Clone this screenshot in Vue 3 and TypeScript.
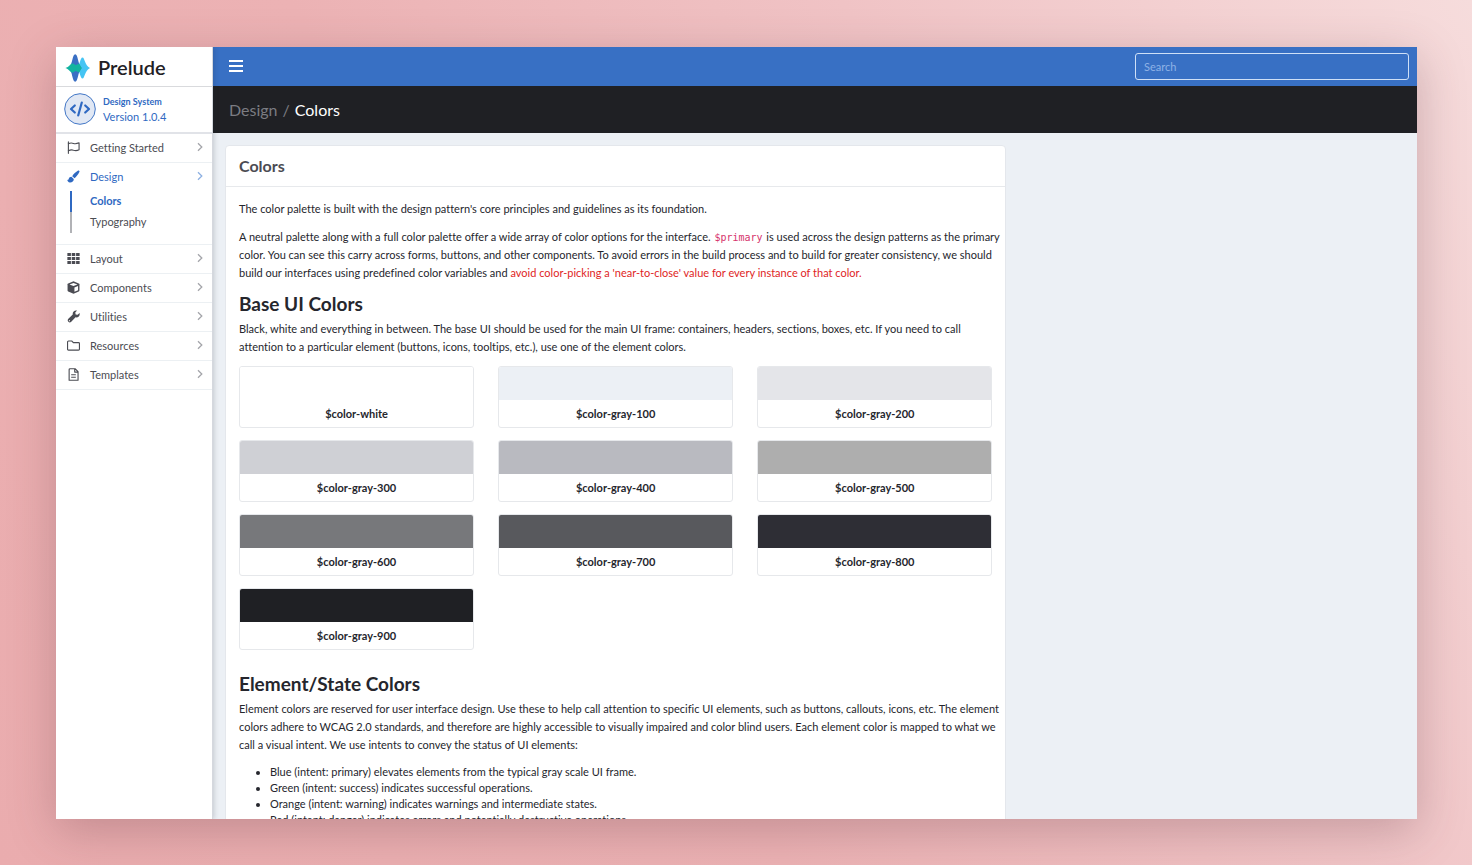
<script setup lang="ts">
import { ref } from 'vue'

interface NavItem {
  label: string
  icon: string
  children?: string[]
}

interface Swatch {
  name: string
  color: string
}

const search = ref('')
const activePage = ref('Colors')

const navItems: NavItem[] = [
  { label: 'Getting Started', icon: 'flag' },
  { label: 'Design', icon: 'brush', children: ['Colors', 'Typography'] },
  { label: 'Layout', icon: 'grid' },
  { label: 'Components', icon: 'cube' },
  { label: 'Utilities', icon: 'wrench' },
  { label: 'Resources', icon: 'folder' },
  { label: 'Templates', icon: 'file' },
]

const swatches: Swatch[] = [
  { name: '$color-white', color: '#ffffff' },
  { name: '$color-gray-100', color: '#ecf0f5' },
  { name: '$color-gray-200', color: '#e4e5e9' },
  { name: '$color-gray-300', color: '#cfd0d5' },
  { name: '$color-gray-400', color: '#b9bac0' },
  { name: '$color-gray-500', color: '#aeaeae' },
  { name: '$color-gray-600', color: '#77787b' },
  { name: '$color-gray-700', color: '#58595d' },
  { name: '$color-gray-800', color: '#2e2e35' },
  { name: '$color-gray-900', color: '#1f2024' },
]
</script>

<template>
  <div class="stage">
    <div class="window">
      <aside class="sidebar">
        <a class="brand" href="#">
          <svg class="brand-mark" viewBox="0 0 26 28" aria-hidden="true">
            <path d="M17.500 3.500C19.800 3.500 19.600 11.500 25 14C19.600 16.500 19.800 24.500 17.500 24.500C15.200 24.500 15 17 12 14C15 11 15.200 3.500 17.500 3.500Z" fill="#45c4f3" />
            <path d="M10.200 .2C13 .2 12.800 10 16.500 14C12.800 18 13 27.800 10.200 27.800C7.400 27.800 7.600 18 3.900 14C7.600 10 7.400 .2 10.200 .2Z" fill="#3a6fc4" />
            <path d="M.4 14C4.200 13 5.300 9.400 7.600 9.400C9.400 9.400 9.400 11 10.800 11C12.200 11 12.300 9.700 13.600 9.700C15 9.700 15.400 12.600 17 14C15.400 15.400 15 18.300 13.600 18.300C12.300 18.300 12.200 17 10.800 17C9.400 17 9.400 18.600 7.600 18.600C5.300 18.600 4.200 15 .4 14Z" fill="#12b3a0" />
          </svg>
          <span>Prelude</span>
        </a>

        <div class="product">
          <svg class="product-mark" viewBox="0 0 32 32" aria-hidden="true">
            <circle cx="16" cy="16" r="15.300" fill="#e1e8f4" stroke="#4377c6" stroke-width="1" />
            <path d="M10.800 12.500L7 16L10.800 19.500M21.200 12.500L25 16L21.200 19.500M17.800 9.500L14.200 22.500" fill="none" stroke="#2f69c2" stroke-width="2.200" stroke-linecap="round" stroke-linejoin="round" />
          </svg>
          <div>
            <div class="product-name">Design System</div>
            <div class="product-version">Version 1.0.4</div>
          </div>
        </div>

        <nav class="nav" aria-label="Main">
          <div v-for="item in navItems" :key="item.label" class="nav-group" :class="{ open: item.children }">
            <a class="nav-link" href="#">
              <svg class="nav-icon" viewBox="0 0 14 14" aria-hidden="true">
                <g v-if="item.icon === 'flag'" fill="none" stroke="currentColor" stroke-width="1.200" stroke-linejoin="round" stroke-linecap="round">
                  <path d="M1.500 1V13.300" />
                  <path d="M1.500 3C4 1.500 5.500 2 7 2.600C9 3.400 10.500 3 13 2V9.500C10.500 10.700 9 10.600 7 9.900C5.500 9.300 4 9.200 1.500 10.500" />
                </g>
                <g v-else-if="item.icon === 'brush'" fill="currentColor">
                  <path d="M12 .6C12.900 .1 14 1.100 13.300 2.200C11.800 5 10 7.500 8.200 8.900L5.600 6.700C7 4.500 9.500 2 12 .6Z" />
                  <path d="M4.700 7.400L7.300 9.800C7.400 12.300 5.300 13.700 3 13.500C1.500 13.400 .4 12 .3 10.600C1 11 1.500 10.700 1.800 9.700C2.200 8.300 3.400 7.400 4.700 7.400Z" />
                </g>
                <g v-else-if="item.icon === 'grid'" fill="currentColor">
                  <path d="M.4 1h3.800v3.400H.4zM5.100 1h3.800v3.400H5.100zM9.800 1h3.800v3.400H9.800zM.4 5.300h3.800v3.400H.4zM5.100 5.300h3.800v3.400H5.100zM9.800 5.300h3.800v3.400H9.800zM.4 9.600h3.800v3.400H.4zM5.100 9.600h3.800v3.400H5.100zM9.800 9.600h3.800v3.400H9.800z" />
                </g>
                <g v-else-if="item.icon === 'cube'">
                  <path d="M7 .4L12.700 2.600Q13.400 2.900 13.400 3.600V10.200Q13.400 10.900 12.700 11.200L7 13.600L1.300 11.200Q.6 10.900 .6 10.200V3.600Q.6 2.900 1.300 2.600Z" fill="currentColor" />
                  <path d="M2.700 3.700L7 2.100L11.300 3.700L7 5.300ZM8 7L11.900 5.400V9.900L8 11.700Z" fill="#fff" />
                </g>
                <g v-else-if="item.icon === 'wrench'">
                  <path d="M13.600 3.300C14.200 6.300 12 8.500 9.200 7.900L4.300 13C2.600 14.500-.4 12.100 1.200 9.800L6.200 4.800C5.700 1.800 8.200-.1 10.800 .6L8.900 2.700L9.300 4.800L11.400 5.200Z" fill="currentColor" />
                  <circle cx="2.600" cy="11.500" r=".6" fill="#fff" />
                </g>
                <path v-else-if="item.icon === 'folder'" d="M1.600 2.200H5.200L6.900 3.900H12.400Q13.400 3.900 13.400 4.900V11Q13.400 12 12.400 12H1.600Q.6 12 .6 11V3.200Q.6 2.200 1.600 2.200Z" fill="none" stroke="currentColor" stroke-width="1.200" />
                <g v-else fill="none" stroke="currentColor" stroke-width="1.200" stroke-linejoin="round">
                  <path d="M3.300 .8H8.700L11.900 4V13.200H2.300V1.800Q2.300 .8 3.300 .8ZM8.300 1V4.400H11.700M4.500 7.300H9.500M4.500 10H9.500" />
                </g>
              </svg>
              <span class="nav-label">{{ item.label }}</span>
              <svg class="chevron" viewBox="0 0 6 10" aria-hidden="true">
                <path d="M1 1.200L4.800 5L1 8.800" fill="none" stroke="currentColor" stroke-width="1.300" />
              </svg>
            </a>
            <ul v-if="item.children" class="subnav">
              <li v-for="child in item.children" :key="child">
                <a href="#" :class="{ active: child === activePage }" @click.prevent="activePage = child">{{ child }}</a>
              </li>
            </ul>
          </div>
        </nav>
      </aside>

      <div class="main">
        <header class="topbar">
          <button class="menu" type="button" aria-label="Toggle menu">
            <svg viewBox="0 0 14 14" aria-hidden="true">
              <path d="M0 2H14M0 7H14M0 12H14" stroke="#fff" stroke-width="2" />
            </svg>
          </button>
          <input v-model="search" class="search" type="search" placeholder="Search" aria-label="Search" />
        </header>

        <nav class="crumbs" aria-label="Breadcrumb">
          <a href="#">Design</a>
          <span class="slash">/</span>
          <span class="current">Colors</span>
        </nav>

        <main class="content">
          <article class="card">
            <h1>Colors</h1>
            <div class="card-body">
              <p>The color palette is built with the design pattern's core principles and guidelines as its foundation.</p>
              <p>
                A neutral palette along with a full color palette offer a wide array of color options for the interface.
                <code>$primary</code> is used across the design patterns as the primary color. You can see this carry
                across forms, buttons, and other components. To avoid errors in the build process and to build for
                greater consistency, we should build our interfaces using predefined color variables and
                <span class="danger">avoid color-picking a 'near-to-close' value for every instance of that color.</span>
              </p>

              <h2>Base UI Colors</h2>
              <p>
                Black, white and everything in between. The base UI should be used for the main UI frame: containers,
                headers, sections, boxes, etc. If you need to call attention to a particular element (buttons, icons,
                tooltips, etc.), use one of the element colors.
              </p>

              <div class="swatches">
                <div v-for="swatch in swatches" :key="swatch.name" class="swatch">
                  <div class="chip" :style="{ backgroundColor: swatch.color }"></div>
                  <div class="swatch-name">{{ swatch.name }}</div>
                </div>
              </div>

              <h2>Element/State Colors</h2>
              <p>
                Element colors are reserved for user interface design. Use these to help call attention to specific UI
                elements, such as buttons, callouts, icons, etc. The element colors adhere to WCAG 2.0 standards, and
                therefore are highly accessible to visually impaired and color blind users. Each element color is mapped
                to what we call a visual intent. We use intents to convey the status of UI elements:
              </p>
              <ul class="intents">
                <li>Blue (intent: primary) elevates elements from the typical gray scale UI frame.</li>
                <li>Green (intent: success) indicates successful operations.</li>
                <li>Orange (intent: warning) indicates warnings and intermediate states.</li>
                <li>Red (intent: danger) indicates errors and potentially destructive operations.</li>
              </ul>
            </div>
          </article>
        </main>
      </div>
    </div>
  </div>
</template>

<style>
body {
  margin: 0;
}
</style>

<style scoped>
* {
  box-sizing: border-box;
}

.stage {
  height: 100vh;
  padding: 47px 55px 46px 56px;
  overflow: hidden;
  background: linear-gradient(60deg, #eaacae 0%, #ecb2b4 40%, #f0c3c5 68%, #f6dcdc 100%);
  font-family: Lato, "Liberation Sans", sans-serif;
  font-size: 11px;
  line-height: 17px;
  font-variant-ligatures: none;
  color: #25262d;
}

.window {
  display: flex;
  height: 100%;
  overflow: hidden;
  background: #ecf0f5;
  box-shadow: 0 12px 44px rgba(90, 50, 60, 0.28);
}

a {
  color: inherit;
  text-decoration: none;
}

.sidebar {
  position: relative;
  z-index: 1;
  flex: none;
  width: 157px;
  background: #fff;
  border-right: 1px solid #d5d8de;
  box-shadow: 1px 0 5px rgba(30, 35, 50, 0.2);
}

.brand {
  display: flex;
  align-items: center;
  gap: 7px;
  height: 40px;
  padding: 2px 9px 0;
  border-bottom: 1px solid #d9dadd;
  font-size: 20px;
  font-weight: 600;
  line-height: 24px;
  color: #1f2024;
}

.brand span {
  padding-bottom: 2px;
}

.brand-mark {
  width: 26px;
  height: 28px;
}

.product {
  display: flex;
  align-items: center;
  gap: 7px;
  height: 47px;
  padding: 0 8px 1px;
  border-bottom: 2px solid #e1e3e8;
  line-height: 15px;
  color: #2f69c2;
}

.product-mark {
  width: 32px;
  height: 32px;
}

.product-name {
  font-size: 9px;
  font-weight: 700;
}

.nav-group {
  border-bottom: 1px solid #ecf0f3;
}

.nav-link {
  display: flex;
  align-items: center;
  height: 28px;
  padding: 0 9px 2px 11px;
  color: #4b4c53;
}

.nav-icon {
  width: 13px;
  height: 13px;
  margin-right: 10px;
}

.nav-label {
  flex: 1;
}

.chevron {
  width: 6px;
  height: 10px;
  color: #a4a5aa;
}

.open .nav-link {
  color: #2f69c2;
}

.open .chevron {
  color: #8db0e2;
}

.subnav {
  margin: 0 0 11px 14px;
  padding: 0;
  list-style: none;
  color: #4b4c53;
}

.subnav a {
  display: block;
  padding: 1px 0 3px 18px;
  border-left: 2px solid #b1b2b6;
}

.subnav a.active {
  border-color: #2f69c2;
  font-weight: 700;
  color: #2f69c2;
}

.main {
  flex: 1;
  min-width: 0;
}

.topbar {
  display: flex;
  align-items: center;
  justify-content: space-between;
  height: 39px;
  padding: 0 8px 0 16px;
  background: #3870c4;
}

.menu {
  display: block;
  padding: 0 0 2px;
  border: 0;
  background: none;
}

.menu svg {
  display: block;
  width: 14px;
  height: 14px;
}

.search {
  width: 274px;
  height: 27px;
  padding: 0 8px;
  border: 1px solid #cfe0f7;
  border-radius: 3px;
  outline: 0;
  background: transparent;
  font: inherit;
  color: #fff;
  appearance: none;
}

.search::placeholder {
  color: #8fb2e6;
}

.crumbs {
  display: flex;
  align-items: center;
  gap: 5px;
  height: 47px;
  padding: 0 16px;
  background: #1f2024;
  font-size: 16px;
  line-height: 20px;
  color: #7b7c82;
}

.current {
  color: #fff;
}

.content {
  display: grid;
  grid-template-columns: 2fr 1fr;
  gap: 8px;
  padding: 12px;
}

.card {
  border: 1px solid #e4e7ec;
  border-radius: 4px;
  background: #fff;
}

h1 {
  margin: 0;
  padding: 10px 13px;
  border-bottom: 1px solid #e7e9ec;
  font-size: 16px;
  font-weight: 700;
  line-height: 20px;
  color: #4b4c53;
}

.card-body {
  padding: 13px 2px 13px 13px;
}

p {
  margin: 0 0 10px;
  line-height: 18px;
}

code {
  padding: 0 1px;
  font-family: "DejaVu Sans Mono", monospace;
  font-size: 10px;
  line-height: 1;
  color: #d6336c;
}

.danger {
  color: #e01e25;
}

h2 {
  margin: 0 0 4px;
  font-size: 19px;
  font-weight: 700;
  line-height: 24px;
}

.swatches {
  display: grid;
  grid-template-columns: repeat(3, 1fr);
  gap: 12px 24px;
  margin: 0 11px 22px 0;
}

.swatch {
  overflow: hidden;
  border: 1px solid #e6e8eb;
  border-radius: 3px;
}

.chip {
  height: 33px;
}

.swatch-name {
  padding: 5px 0;
  font-weight: 700;
  text-align: center;
}

.intents {
  margin: 0;
  padding-left: 31px;
  line-height: 16px;
}
</style>
